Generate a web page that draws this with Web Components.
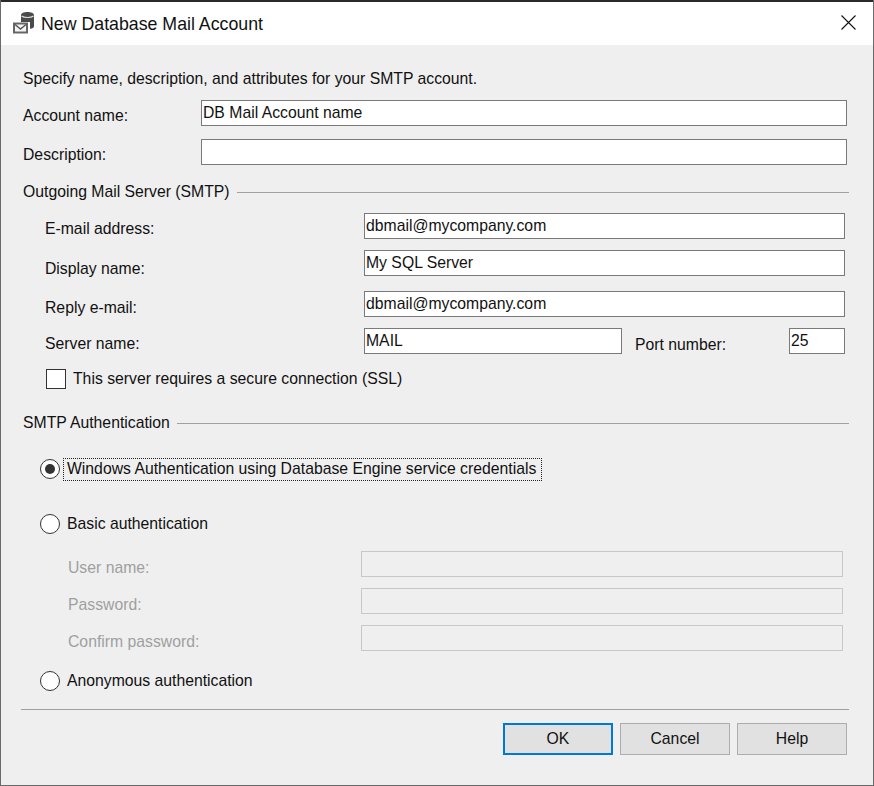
<!DOCTYPE html>
<html lang="en">

<head>
    <meta charset="UTF-8">
    <title>New Database Mail Account</title>
    <style>
        html, body { margin: 0; padding: 0; background: #efefef; }
        body { font: 15.75px "Liberation Sans", Arial, sans-serif; color: #000; }
    </style>
</head>

<body>
    <mail-dialog>
        <title-bar slot="title">New Database Mail Account</title-bar>

        <plain-text style="margin: 25px 0 0 22px;">Specify name, description, and attributes for your SMTP account.</plain-text>

        <form-row label-width="178" style="margin: 12px 26px 0 22px;" label-shift="3">
            <span slot="label">Account name:</span>
            <text-box value="DB Mail Account name"></text-box>
        </form-row>
        <form-row label-width="178" style="margin: 13px 26px 0 22px;" label-shift="3">
            <span slot="label">Description:</span>
            <text-box></text-box>
        </form-row>

        <section-head style="margin: 18px 24px 0 22px;">Outgoing Mail Server (SMTP)</section-head>

        <form-row label-width="319" style="margin: 12px 28px 0 44px;" label-shift="3">
            <span slot="label">E-mail address:</span>
            <text-box value="dbmail@mycompany.com"></text-box>
        </form-row>
        <form-row label-width="319" style="margin: 11px 28px 0 44px;" label-shift="6">
            <span slot="label">Display name:</span>
            <text-box value="My SQL Server"></text-box>
        </form-row>
        <form-row label-width="319" style="margin: 13px 28px 0 44px;" label-shift="4">
            <span slot="label">Reply e-mail:</span>
            <text-box value="dbmail@mycompany.com"></text-box>
        </form-row>
        <form-row label-width="319" style="margin: 11px 28px 0 44px;" label-shift="3">
            <span slot="label">Server name:</span>
            <port-group>
                <text-box slot="server" value="MAIL"></text-box>
                <span slot="label">Port number:</span>
                <text-box slot="port" value="25"></text-box>
            </port-group>
        </form-row>

        <check-box style="margin: 15px 0 0 45px;">This server requires a secure connection (SSL)</check-box>

        <section-head style="margin: 25px 24px 0 22px;">SMTP Authentication</section-head>

        <radio-option checked focused style="margin: 27px 0 0 39px;">Windows Authentication using Database Engine service credentials</radio-option>
        <radio-option style="margin: 35px 0 0 39px;">Basic authentication</radio-option>

        <form-row label-width="293" disabled style="margin: 17px 30px 0 67px;" label-shift="4">
            <span slot="label">User name:</span>
            <text-box disabled></text-box>
        </form-row>
        <form-row label-width="293" disabled style="margin: 11px 30px 0 67px;" label-shift="4">
            <span slot="label">Password:</span>
            <text-box disabled></text-box>
        </form-row>
        <form-row label-width="293" disabled style="margin: 11px 30px 0 67px;" label-shift="4">
            <span slot="label">Confirm password:</span>
            <text-box disabled></text-box>
        </form-row>

        <radio-option style="margin: 20px 0 0 39px;">Anonymous authentication</radio-option>

        <button-bar style="margin: 18px 24px 0 20px;">
            <push-button primary>OK</push-button>
            <push-button>Cancel</push-button>
            <push-button>Help</push-button>
        </button-bar>
    </mail-dialog>

    <template id="mail-dialog">
        <style>
            :host {
                display: block;
                box-sizing: border-box;
                width: 874px;
                height: 786px;
                background: #efefef;
                border: solid #6a6a6a;
                border-width: 0 1px 1px 1px;
                overflow: hidden;
            }
            .top { height: 2px; margin: 0 -1px; background: #2b2b2b; }
        </style>
        <div class="top"></div>
        <slot name="title"></slot>
        <slot></slot>
    </template>

    <template id="title-bar">
        <style>
            :host {
                display: flex;
                align-items: center;
                height: 43px;
                background: #fff;
                font-size: 17.75px;
                color: #111;
            }
            .icon { margin: -1px 0 0 11px; width: 24px; height: 24px; flex: none; }
            .text { margin: 1px 0 0 5px; flex: 1; }
            .close { margin: 0 17px 2px 0; width: 15px; height: 15px; flex: none; }
        </style>
        <svg class="icon" viewBox="0 0 24 24">
            <path d="M9 4C9 2.300 12 1 15.500 1S22 2.300 22 4v11.500c0 1.200-1.500 2-4 2.300V11H9z" fill="#4a4a4a"/>
            <path d="M9.500 5c1.300 1 3.300 1.500 6 1.500s4.800-.5 6-1.500" fill="none" stroke="#ddd" stroke-width="1.200"/>
            <path d="M2 12.500h13v9H2z" fill="#f4f4f4" stroke="#666" stroke-width="2"/>
            <path d="M3 13.500l5.500 4.500 5.500-4.500" fill="none" stroke="#555" stroke-width="1.400"/>
        </svg>
        <span class="text"><slot></slot></span>
        <svg class="close" viewBox="0 0 15 15">
            <path d="M.5.500l14 14M14.500.500l-14 14" fill="none" stroke="#111" stroke-width="1.100"/>
        </svg>
    </template>

    <template id="plain-text">
        <style>
            :host { display: block; line-height: 18px; color: #111; }
        </style>
        <slot></slot>
    </template>

    <template id="form-row">
        <style>
            :host { display: flex; align-items: flex-start; color: #111; }
            :host([disabled]) { color: #9f9f9f; }
            .label { flex: none; line-height: 18px; }
            .field { flex: 1; min-width: 0; }
        </style>
        <div class="label"><slot name="label"></slot></div>
        <div class="field"><slot></slot></div>
    </template>

    <template id="text-box">
        <style>
            :host {
                display: block;
                box-sizing: border-box;
                height: 26px;
                background: #fff;
                border: 1px solid #7a7a7a;
                padding: 0 1px;
                line-height: 24px;
                color: #111;
            }
            :host([disabled]) { background: #efefef; border-color: #c8c8c8; }
        </style>
        <span></span>
    </template>

    <template id="port-group">
        <style>
            :host { display: flex; align-items: flex-start; }
            ::slotted([slot=server]) { width: 258px; flex: none; }
            ::slotted([slot=port]) { width: 56px; flex: none; }
            .label { flex: 1; margin: 8px 0 0 13px; line-height: 18px; }
        </style>
        <slot name="server"></slot>
        <div class="label"><slot name="label"></slot></div>
        <slot name="port"></slot>
    </template>

    <template id="section-head">
        <style>
            :host { display: flex; align-items: center; gap: 7px; height: 18px; line-height: 18px; color: #111; }
            .rule { flex: 1; height: 1px; background: #a0a0a0; }
        </style>
        <span><slot></slot></span>
        <div class="rule"></div>
    </template>

    <template id="check-box">
        <style>
            :host { display: flex; align-items: center; gap: 7px; height: 20px; color: #111; }
            .box { box-sizing: border-box; width: 20px; height: 20px; background: #fff; border: 1px solid #333; }
        </style>
        <div class="box"></div>
        <span><slot></slot></span>
    </template>

    <template id="radio-option">
        <style>
            :host { display: flex; align-items: center; height: 20px; color: #111; }
            .dot {
                box-sizing: border-box;
                flex: none;
                display: flex;
                align-items: center;
                justify-content: center;
                width: 20px;
                height: 20px;
                background: #fff;
                border: 1px solid #333;
                border-radius: 50%;
            }
            :host([checked]) .dot::after {
                content: "";
                width: 10px;
                height: 10px;
                border-radius: 50%;
                background: #333;
            }
            .text { margin-left: 3px; padding: 1px 5px 2px 3px; line-height: 18px; border: 1px dotted transparent; }
            :host([focused]) .text { border-color: #222; }
        </style>
        <div class="dot"></div>
        <span class="text"><slot></slot></span>
    </template>

    <template id="button-bar">
        <style>
            :host { display: block; border-top: 1px solid #a0a0a0; }
            .buttons { display: flex; justify-content: flex-end; gap: 7px; margin: 13px 0 0; padding-right: 2px; }
        </style>
        <div class="buttons"><slot></slot></div>
    </template>

    <template id="push-button">
        <style>
            :host {
                display: flex;
                align-items: center;
                justify-content: center;
                box-sizing: border-box;
                width: 110px;
                height: 32px;
                background: #e1e1e1;
                border: 1px solid #adadad;
                color: #111;
            }
            :host([primary]) { border: 2px solid #0078d7; }
        </style>
        <slot></slot>
    </template>

    <script>
        // plain elements: clone the template with the same id as the tag
        function simple(tag) {
            customElements.define(tag, class extends HTMLElement {
                constructor() {
                    super();
                    let template = document.getElementById(tag);
                    this.attachShadow({ mode: 'open' }).appendChild(template.content.cloneNode(true));
                }
            });
        }
        ['mail-dialog', 'title-bar', 'plain-text', 'port-group', 'section-head', 'check-box',
            'radio-option', 'button-bar', 'push-button'].forEach(simple);

        customElements.define('form-row', class extends HTMLElement {
            constructor() {
                super();
                let template = document.getElementById('form-row');
                this.attachShadow({ mode: 'open' }).appendChild(template.content.cloneNode(true));
            }
            connectedCallback() {
                let label = this.shadowRoot.querySelector('.label');
                label.style.width = this.getAttribute('label-width') + 'px';
                label.style.marginTop = (this.getAttribute('label-shift') || 0) * 1 + 4 + 'px';
            }
        });

        customElements.define('text-box', class extends HTMLElement {
            constructor() {
                super();
                let template = document.getElementById('text-box');
                this.attachShadow({ mode: 'open' }).appendChild(template.content.cloneNode(true));
            }
            connectedCallback() {
                this.shadowRoot.querySelector('span').textContent = this.getAttribute('value') || '';
            }
        });
    </script>
</body>

</html>
